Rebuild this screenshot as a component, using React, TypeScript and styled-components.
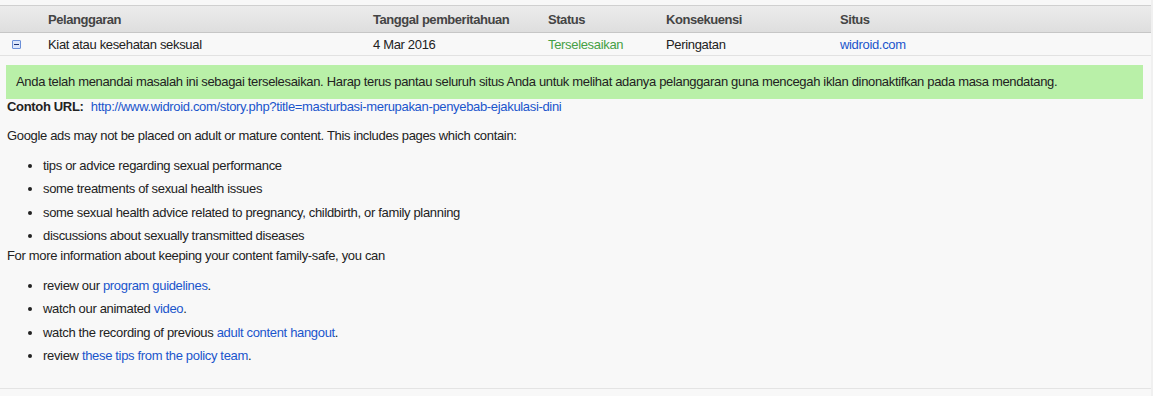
import React from 'react';
import styled, { createGlobalStyle } from 'styled-components';

const GlobalStyle = createGlobalStyle`
  body {
    margin: 0;
    background: #f0f0f0;
    font-family: "Liberation Sans", Arial, sans-serif;
    font-size: 13px;
    letter-spacing: -0.33px;
    color: #222;
  }
`;

const Wrapper = styled.div`
  width: 1151px;
  padding-top: 5px;
  background: #f8f8f8;
`;

const Table = styled.div`
  border-top: 1px solid #d0d0d0;
`;

const Row = styled.div<{ $head?: boolean }>`
  display: grid;
  grid-template-columns: 48px 325px 175px 118px 174px 1fr;
  align-items: center;
  height: ${(p) => (p.$head ? '26px' : '22px')};
  background: ${(p) =>
    p.$head ? 'linear-gradient(#ececec, #dedede)' : '#f8f8f8'};
  border-bottom: 1px solid ${(p) => (p.$head ? '#c6c6c6' : '#e2e2e2')};
  font-weight: ${(p) => (p.$head ? 700 : 400)};
  letter-spacing: ${(p) => (p.$head ? '-0.45px' : 'inherit')};
  color: ${(p) => (p.$head ? '#444' : '#222')};
`;

const Cell = styled.div<{ $color?: string }>`
  color: ${(p) => p.$color || 'inherit'};
  white-space: nowrap;
`;

const ToggleCell = styled.div`
  padding-left: 12px;
  display: flex;
  align-items: center;
`;

const Toggle = styled.span`
  width: 7px;
  height: 7px;
  border: 1px solid #6a8fd8;
  border-radius: 1px;
  background: #dbe6fb;
  display: flex;
  align-items: center;
  justify-content: center;

  &::after {
    content: '';
    width: 5px;
    height: 1px;
    background: #1a2f70;
  }
`;

const Detail = styled.div`
  padding: 9px 8px 20px 7px;
  border-bottom: 1px solid #e4e4e4;
`;

const Notice = styled.div`
  margin-left: -1px;
  padding: 9px 10px;
  line-height: 16px;
  background: #b9f0a8;
  color: #222;
`;

const UrlLine = styled.div`
  line-height: 16px;
`;

const Label = styled.b`
  margin-right: 4px;
`;

const A = styled.a`
  color: #1a55cc;
  text-decoration: none;
`;

const Para = styled.p<{ $top: number }>`
  margin: ${(p) => p.$top}px 0 0;
  line-height: 16px;
`;

const List = styled.ul<{ $top: number }>`
  margin: ${(p) => p.$top}px 0 0;
  padding-left: 36px;
`;

const Item = styled.li`
  line-height: 16px;
  padding: 3.75px 0;
`;

const NoteRow = styled.div`
  height: 9px;
`;

const columns = ['Pelanggaran', 'Tanggal pemberitahuan', 'Status', 'Konsekuensi', 'Situs'];

function App() {
  return (
    <>
      <GlobalStyle />
      <Wrapper>
        <Table>
          <Row $head>
            <div />
            {columns.map((c) => (
              <Cell key={c}>{c}</Cell>
            ))}
          </Row>
          <Row>
            <ToggleCell>
              <Toggle />
            </ToggleCell>
            <Cell>Kiat atau kesehatan seksual</Cell>
            <Cell>4 Mar 2016</Cell>
            <Cell $color="#45a045">Terselesaikan</Cell>
            <Cell>Peringatan</Cell>
            <Cell $color="#1a55cc">widroid.com</Cell>
          </Row>
        </Table>
        <Detail>
          <Notice>
            Anda telah menandai masalah ini sebagai terselesaikan. Harap terus pantau seluruh situs Anda untuk melihat adanya pelanggaran guna mencegah iklan dinonaktifkan pada masa mendatang.
          </Notice>
          <UrlLine>
            <Label>Contoh URL:</Label>{' '}
            <A href="#">http://www.widroid.com/story.php?title=masturbasi-merupakan-penyebab-ejakulasi-dini</A>
          </UrlLine>
          <Para $top={13}>
            Google ads may not be placed on adult or mature content. This includes pages which contain:
          </Para>
          <List $top={10}>
            <Item>tips or advice regarding sexual performance</Item>
            <Item>some treatments of sexual health issues</Item>
            <Item>some sexual health advice related to pregnancy, childbirth, or family planning</Item>
            <Item>discussions about sexually transmitted diseases</Item>
          </List>
          <Para $top={0}>For more information about keeping your content family-safe, you can</Para>
          <List $top={10}>
            <Item>
              review our <A href="#">program guidelines</A>.
            </Item>
            <Item>
              watch our animated <A href="#">video</A>.
            </Item>
            <Item>
              watch the recording of previous <A href="#">adult content hangout</A>.
            </Item>
            <Item>
              review <A href="#">these tips from the policy team</A>.
            </Item>
          </List>
        </Detail>
        <NoteRow />
      </Wrapper>
    </>
  );
}

export default App;
